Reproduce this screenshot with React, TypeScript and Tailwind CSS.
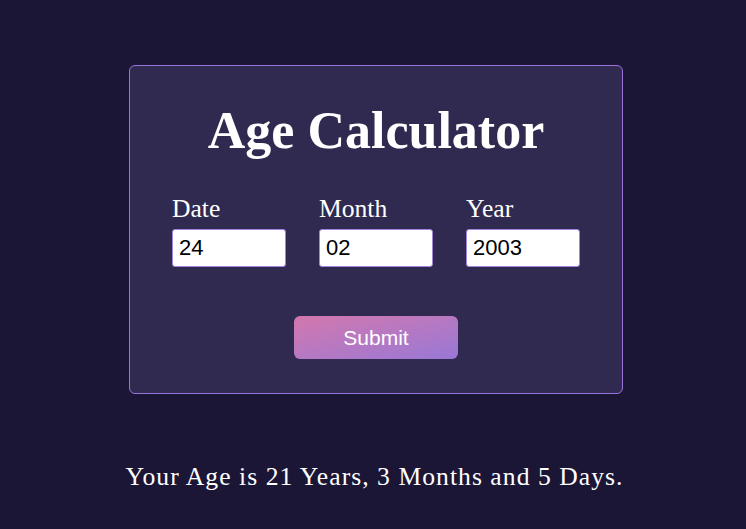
import React from "react";

export default function App() {
  const serif = { fontFamily: '"Liberation Serif", "Times New Roman", serif' };
  const fields = [
    { label: "Date", value: "24" },
    { label: "Month", value: "02" },
    { label: "Year", value: "2003" },
  ];
  return (
    <div className="min-h-[529px] w-full bg-[#1b1635] pt-[65px] flex flex-col items-center" style={serif}>
      <div className="w-[494px] h-[329px] ml-[6px] rounded-[6px] border-[1.5px] border-[#9a72de] bg-[#312a50] flex flex-col items-center">
        <h1 className="mt-[35px] text-[52px] leading-[60px] font-bold text-white font-['Liberation_Serif',serif]">Age Calculator</h1>
        <div className="mt-[33px] flex gap-[33px]">
          {fields.map((f) => (
            <div key={f.label} className="flex flex-col w-[114px]">
              <label className="text-[25.6px] leading-[29px] text-white">{f.label}</label>
              <input
                defaultValue={f.value}
                className="mt-[6px] h-[38px] w-[114px] rounded-[3px] border-[1.5px] border-[#a484dc] bg-white px-[6px] text-[22px] text-black outline-none font-['Liberation_Sans',Arial,sans-serif]"
              />
            </div>
          ))}
        </div>
        <button className="mt-[49px] h-[43px] w-[164px] rounded-[6px] bg-gradient-to-br from-[#d377ad] to-[#9877d6] text-[21px] text-white font-['Liberation_Sans',Arial,sans-serif]">
          Submit
        </button>
      </div>
      <p className="mt-[64px] ml-[3px] text-[25.6px] tracking-[1.05px] text-white">
        Your Age is 21 Years, 3 Months and 5 Days.
      </p>
    </div>
  );
}
